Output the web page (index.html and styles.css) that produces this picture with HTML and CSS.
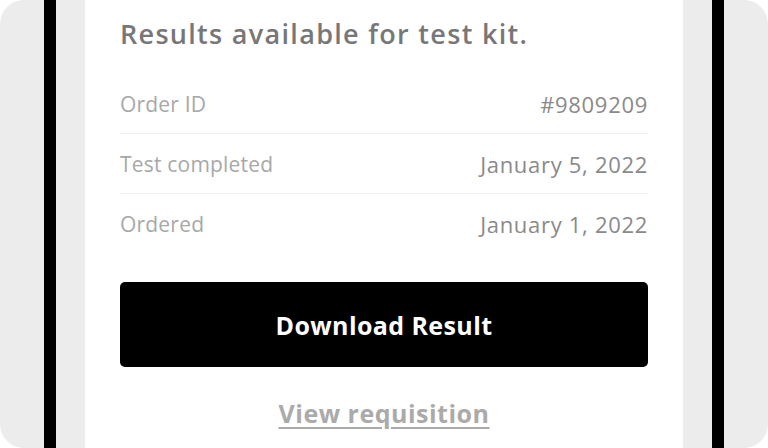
FILE: index.html
```html
<!DOCTYPE html>
<html>
<head>
<meta charset="utf-8">
<link rel="stylesheet" href="styles.css">
</head>
<body>
<div class="device">
  <div class="phone">
    <div class="card">
      <h1 class="title">Results available for test kit.</h1>
      <div class="rows">
        <div class="row"><span class="label">Order ID</span><span class="value">#9809209</span></div>
        <div class="row"><span class="label">Test completed</span><span class="value">January 5, 2022</span></div>
        <div class="row last"><span class="label">Ordered</span><span class="value">January 1, 2022</span></div>
      </div>
      <button class="btn">Download Result</button>
      <a class="link" href="#">View requisition</a>
    </div>
  </div>
</div>
</body>
</html>
```

FILE: styles.css
```css
html, body {
  margin: 0;
  padding: 0;
  background: #ffffff;
}
body {
  font-family: "Open Sans", "Lato", sans-serif;
}
.device {
  width: 768px;
  height: 448px;
  background: #ececec;
  border-radius: 24px;
  overflow: hidden;
  display: flex;
  justify-content: center;
}
.phone {
  width: 598px;
  height: 448px;
  border-left: 12px solid #000;
  border-right: 12px solid #000;
  background: #ececec;
  padding: 0 29px;
  display: flex;
}
.card {
  flex: 1;
  background: #fff;
  padding: 16px 35px 0;
  display: flex;
  flex-direction: column;
}
.title {
  margin: 0;
  font-size: 27px;
  line-height: 36px;
  font-weight: 600;
  color: #777;
  letter-spacing: 1.3px;
}
.rows {
  margin-top: 22px;
}
.row {
  height: 59px;
  display: flex;
  justify-content: space-between;
  align-items: center;
  border-bottom: 1px solid #f0f0f0;
  font-size: 21px;
}
.row.last {
  border-bottom: none;
}
.label {
  color: #a8a8a8;
  letter-spacing: 0.2px;
}
.value {
  color: #8a8a8a;
  font-size: 22px;
  letter-spacing: 0.7px;
}
.btn {
  margin-top: 29px;
  height: 85px;
  border: none;
  border-radius: 5px;
  background: #000;
  color: #fff;
  font-family: inherit;
  font-size: 25px;
  font-weight: 700;
  letter-spacing: 0.4px;
  cursor: pointer;
}
.link {
  align-self: center;
  margin-top: 29px;
  font-size: 25px;
  font-weight: 700;
  color: #aaa;
  letter-spacing: 0.5px;
  text-decoration: underline;
  text-underline-offset: 4px;
}
```
